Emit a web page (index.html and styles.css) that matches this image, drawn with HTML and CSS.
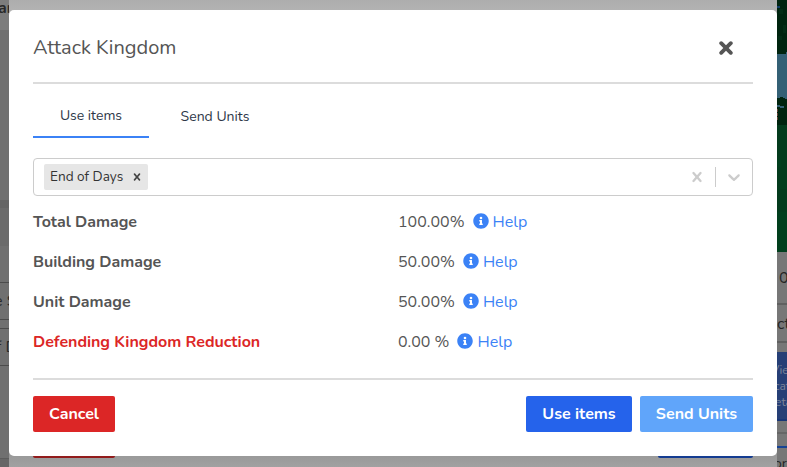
FILE: index.html
```html
<!DOCTYPE html>
<html lang="en">
<head>
<meta charset="utf-8">
<title>Attack Kingdom</title>
<link rel="stylesheet" href="styles.css">
</head>
<body>
<svg class="defs" width="0" height="0">
  <symbol id="info" viewBox="0 0 512 512"><path d="M256 8C119 8 8 119 8 256s111 248 248 248 248-111 248-248S393 8 256 8zm0 110a42 42 0 1 1 0 84 42 42 0 0 1 0-84zm56 254c0 7-5 12-12 12h-88c-7 0-12-5-12-12v-24c0-7 5-12 12-12h12v-64h-12c-7 0-12-5-12-12v-24c0-7 5-12 12-12h64c7 0 12 5 12 12v100h12c7 0 12 5 12 12z"/></symbol>
  <symbol id="clear" viewBox="0 0 20 20"><path d="M14.348 14.849a1.2 1.2 0 0 1-1.697 0L10 11.819l-2.651 3.029a1.2 1.2 0 1 1-1.697-1.697l2.758-3.15-2.759-3.152a1.2 1.2 0 1 1 1.697-1.697L10 8.183l2.651-3.031a1.2 1.2 0 1 1 1.697 1.697l-2.758 3.152 2.758 3.15a1.2 1.2 0 0 1 0 1.698z"/></symbol>
</svg>
<div class="page">
  <div class="left">
    <div class="l-head">ar</div>
    <div class="l-band"></div>
    <div class="l-field">e S</div>
    <div class="l-field second">f D</div>
    <div class="l-foot"></div>
  </div>
  <div class="under"><span class="under-red"></span><span class="under-blue"></span></div>
  <div class="right">
    <svg class="map" width="10" height="252" viewBox="0 0 10 252" shape-rendering="crispEdges">
      <path fill="#00240f" d="M0 0h10v125H0z"/><path fill="#032c15" d="M2 9h4v5H2zM6 25h3v8H6zM1 36h4v4H1z"/>
      <path fill="#123d68" d="M0 6h3v2H0z"/><path fill="#346075" d="M0 54h9v-2h1v47H8v-1H6v-1H3v1H0z"/>
      <path fill="#346075" d="M0 105h3v1h4v2H3v-1H0z"/><path fill="#684336" d="M0 109h1v3H0zM0 113h1v3H0zM0 117h1v3H0z"/>
      <path fill="#033b1c" d="M0 125h10v127H0z"/><path fill="#013f1d" d="M0 160h4v7H0zM3 180h7v9H3zM0 212h10v40H0z"/>
    </svg>
    <div class="r-value">0</div>
    <div class="r-label">ct</div>
    <div class="r-blue"><p>Vie</p><p>cat</p><p>eta</p></div>
    <div class="r-gap"></div>
    <div class="r-tab">ort</div>
  </div>
</div>

<main class="modal">
  <header class="header">
    <h1>Attack Kingdom</h1>
    <svg class="close" viewBox="0 0 14 14"><path d="M2.2 2.2l9.6 9.6M11.8 2.2L2.2 11.8"/></svg>
  </header>
  <nav class="tabs"><span class="tab active">Use items</span><span class="tab">Send Units</span></nav>
  <div class="select">
    <div class="chip"><span>End of Days</span><svg viewBox="0 0 20 20"><use href="#clear"/></svg></div>
    <div class="controls">
      <svg viewBox="0 0 20 20"><use href="#clear"/></svg>
      <i></i>
      <svg viewBox="0 0 20 20"><path d="M4.516 7.548c0.436-0.446 1.043-0.481 1.576 0l3.908 3.747 3.908-3.747c0.533-0.481 1.141-0.446 1.574 0 0.436 0.445 0.408 1.197 0 1.615-0.406 0.418-4.695 4.502-4.695 4.502-0.217 0.223-0.502 0.335-0.787 0.335s-0.57-0.112-0.789-0.335c0 0-4.287-4.084-4.695-4.502s-0.436-1.17 0-1.615z"/></svg>
    </div>
  </div>
  <dl class="stats">
    <dt>Total Damage</dt><dd><span>100.00%</span><a><svg><use href="#info"/></svg><span>Help</span></a></dd>
    <dt>Building Damage</dt><dd><span>50.00%</span><a><svg><use href="#info"/></svg><span>Help</span></a></dd>
    <dt>Unit Damage</dt><dd><span>50.00%</span><a><svg><use href="#info"/></svg><span>Help</span></a></dd>
    <dt class="s-defend">Defending Kingdom Reduction</dt><dd><span>0.00 %</span><a><svg><use href="#info"/></svg><span>Help</span></a></dd>
  </dl>
  <footer class="footer">
    <button class="cancel">Cancel</button>
    <button class="use">Use items</button>
    <button class="send">Send Units</button>
  </footer>
</main>
</body>
</html>
```
FILE: styles.css
```css
* { box-sizing: border-box; }
body { margin: 0; width: 787px; height: 467px; overflow: hidden; position: relative; font: 16px/24px Nunito, Lato, sans-serif; color: #555; background: #777; }
h1, p, dl, dd { margin: 0; }
.defs { position: absolute; }
.page { display: grid; grid-template-columns: 9px 768px 10px; height: 467px; }
.left, .right { overflow: hidden; white-space: nowrap; display: flex; flex-direction: column; }
.left { background: #707070; color: #292929; }
.l-head { height: 32px; flex: none; border-bottom: 2px solid #707070; background: #7d7d7d; font-weight: 700; font-size: 16px; line-height: 16px; margin-left: -3px; padding-left: 1px; }
.l-band { height: 46px; flex: none; margin-top: 168px; background: #6b6b6b; border-top: 8px solid #656565; }
.l-field { height: 38px; flex: none; border: solid #4c4c4c; border-width: 1px 0; line-height: 36px; margin-top: 36px; margin-left: -6px; }
.l-field.second { margin-top: 8px; margin-left: -4px; }
.l-foot { margin-top: 92px; border-top: 1px solid #5c5c5c; flex: 1; background: #666; }
.under { background: linear-gradient(#adadad, #b2b2b2 10px, #999 455px, #a1a1a1); display: flex; justify-content: space-between; align-items: flex-end; padding: 0 24px 9px; }
.under span { height: 36px; border-radius: 2px; }
.under-red { width: 82px; background: #921b1b; }
.under-blue { width: 95px; background: #133c91; }
.right { background: #777; color: #252525; }
.map { flex: none; display: block; }
.r-value { height: 53px; flex: none; line-height: 52px; border-bottom: 2px solid #606060; padding-left: 2px; }
.r-label { height: 38px; flex: none; line-height: 38px; border-bottom: 2px solid #606060; text-indent: 0; }
.r-blue { height: 69px; flex: none; margin-top: 9px; padding-top: 10px; background: #263f76; border-bottom: 2px solid #183676; color: #7b8498; font-size: 12px; line-height: 16px; }
.r-blue p { margin-left: -6px; }
.r-blue p + p { margin-left: -3px; }
.r-blue p + p + p { margin-left: -2px; }
.r-gap { height: 25px; flex: none; background: linear-gradient(#777 11px, #666 11px 13px, #777 13px); }
.r-tab { flex: 1; border-top: 2px solid #174394; background: #777; padding-top: 4px; font-size: 14px; text-indent: -3px; }
.modal { position: absolute; left: 9px; top: 10px; width: 768px; height: 446px; padding: 0 24px; background: #fff; border-radius: 5px; }
.header { height: 74px; display: flex; justify-content: space-between; align-items: center; border-bottom: 2px solid #dcdcdc; }
h1 { font-size: 20px; line-height: 28px; font-weight: 400; padding-top: 3px; }
.close { width: 14px; height: 14px; margin: 4px 20px 0 0; fill: none; stroke: #555; stroke-width: 3.8; stroke-linecap: round; }
.tabs { display: flex; height: 54px; font-size: 14px; color: #2d3748; }
.tab { width: 116px; display: flex; justify-content: center; padding: 21px 0 0; line-height: 24px; }
.tab + .tab { margin-left: 8px; }
.tab.active { padding-top: 20px; border-bottom: 2px solid #3b82f6; }
.select { height: 38px; margin-top: 20px; display: flex; align-items: center; justify-content: space-between; border: 1px solid #ccc; border-radius: 4px; padding-left: 10px; }
.chip { display: flex; align-items: center; justify-content: space-between; width: 104px; height: 26px; padding: 0 4px 0 6px; background: #e6e6e6; border-radius: 2px; color: #333; font-size: 13.6px; }
.chip svg { width: 14px; height: 14px; fill: #444; }
.controls { display: flex; align-items: center; }
.controls svg { width: 20px; height: 20px; margin: 0 8px; fill: #ccc; }
.controls i { width: 1px; height: 20px; background: #ccc; }
.stats { display: grid; grid-template-columns: 365px 1fr; grid-auto-rows: 40px; margin-top: 6px; height: 176px; line-height: 40px; }
dt { font-weight: 700; letter-spacing: -.02px; }
dd { display: flex; }
.s-defend { color: #dc2626; }
dd a { display: flex; align-items: center; margin-left: 8px; color: #3b82f6; }
dd svg { width: 16px; height: 16px; margin: -2px 4px 0 0; fill: currentColor; }
.footer { border-top: 2px solid #dcdcdc; padding-top: 16px; display: flex; gap: 8px; }
button { height: 36px; border: 0; border-radius: 2px; padding: 0; color: #fff; font: 700 16px/24px Nunito, Lato, sans-serif; }
.cancel { width: 82px; background: #dc2626; margin-right: auto; }
.use { width: 106px; background: #2563eb; }
.send { width: 113px; background: #60a5fa; }
```
